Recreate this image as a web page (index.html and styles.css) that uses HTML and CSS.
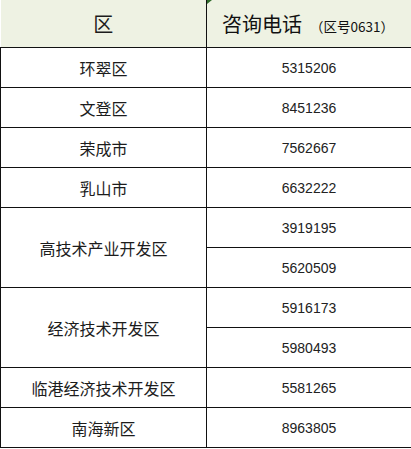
FILE: index.html
```html
<!DOCTYPE html>
<html lang="zh-CN">
<head>
<meta charset="utf-8">
<link rel="stylesheet" href="styles.css">
</head>
<body>
<div class="wrap">
<table class="tbl">
<colgroup><col class="c1"><col class="c2"></colgroup>
<thead>
<tr class="head">
<th class="h-area">区</th>
<th class="h-tel"><span class="tri"></span>咨询电话<span class="code">（区号0631）</span></th>
</tr>
</thead>
<tbody>
<tr><td class="area">环翠区</td><td class="num">5315206</td></tr>
<tr><td class="area">文登区</td><td class="num">8451236</td></tr>
<tr><td class="area">荣成市</td><td class="num">7562667</td></tr>
<tr><td class="area">乳山市</td><td class="num">6632222</td></tr>
<tr><td class="area" rowspan="2">高技术产业开发区</td><td class="num">3919195</td></tr>
<tr><td class="num">5620509</td></tr>
<tr><td class="area" rowspan="2">经济技术开发区</td><td class="num">5916173</td></tr>
<tr><td class="num">5980493</td></tr>
<tr><td class="area">临港经济技术开发区</td><td class="num">5581265</td></tr>
<tr><td class="area">南海新区</td><td class="num">8963805</td></tr>
</tbody>
</table>
</div>
</body>
</html>
```
FILE: styles.css
```css
html, body {
  margin: 0;
  padding: 0;
  background: #ffffff;
}
.wrap {
  width: 411px;
  height: 449px;
  overflow: hidden;
}
.tbl {
  width: 411px;
  border-collapse: collapse;
  table-layout: fixed;
  font-family: "Noto Sans CJK SC", "DejaVu Sans", sans-serif;
  color: #1c1c1c;
}
.c1 { width: 206px; }
.c2 { width: 205px; }
.head th {
  height: 47px;
  padding: 0;
  background: #eef2e3;
  font-weight: 400;
  border-bottom: 1px solid #111;
  text-align: center;
  vertical-align: middle;
}
.head .h-area {
  font-size: 20px;
  border-right: 1px solid #111;
}
.head .h-tel {
  position: relative;
  font-size: 20px;
  font-weight: 400;
  color: #111;
  border-right: 1px solid #111;
  text-align: left;
  padding-left: 15px;
}
.code {
  font-size: 13.5px;
  font-weight: 400;
  margin-left: 8px;
}
.tri {
  position: absolute;
  left: 0;
  top: 0;
  width: 0;
  height: 0;
  border-top: 4px solid #2f6b2a;
  border-right: 5px solid transparent;
}
td {
  height: 39px;
  padding: 0;
  border: 1px solid #111;
  text-align: center;
  vertical-align: middle;
}
.area {
  font-size: 16px;
}
.num {
  font-family: "Liberation Sans", Arial, sans-serif;
  font-size: 14px;
  color: #222;
}
```
